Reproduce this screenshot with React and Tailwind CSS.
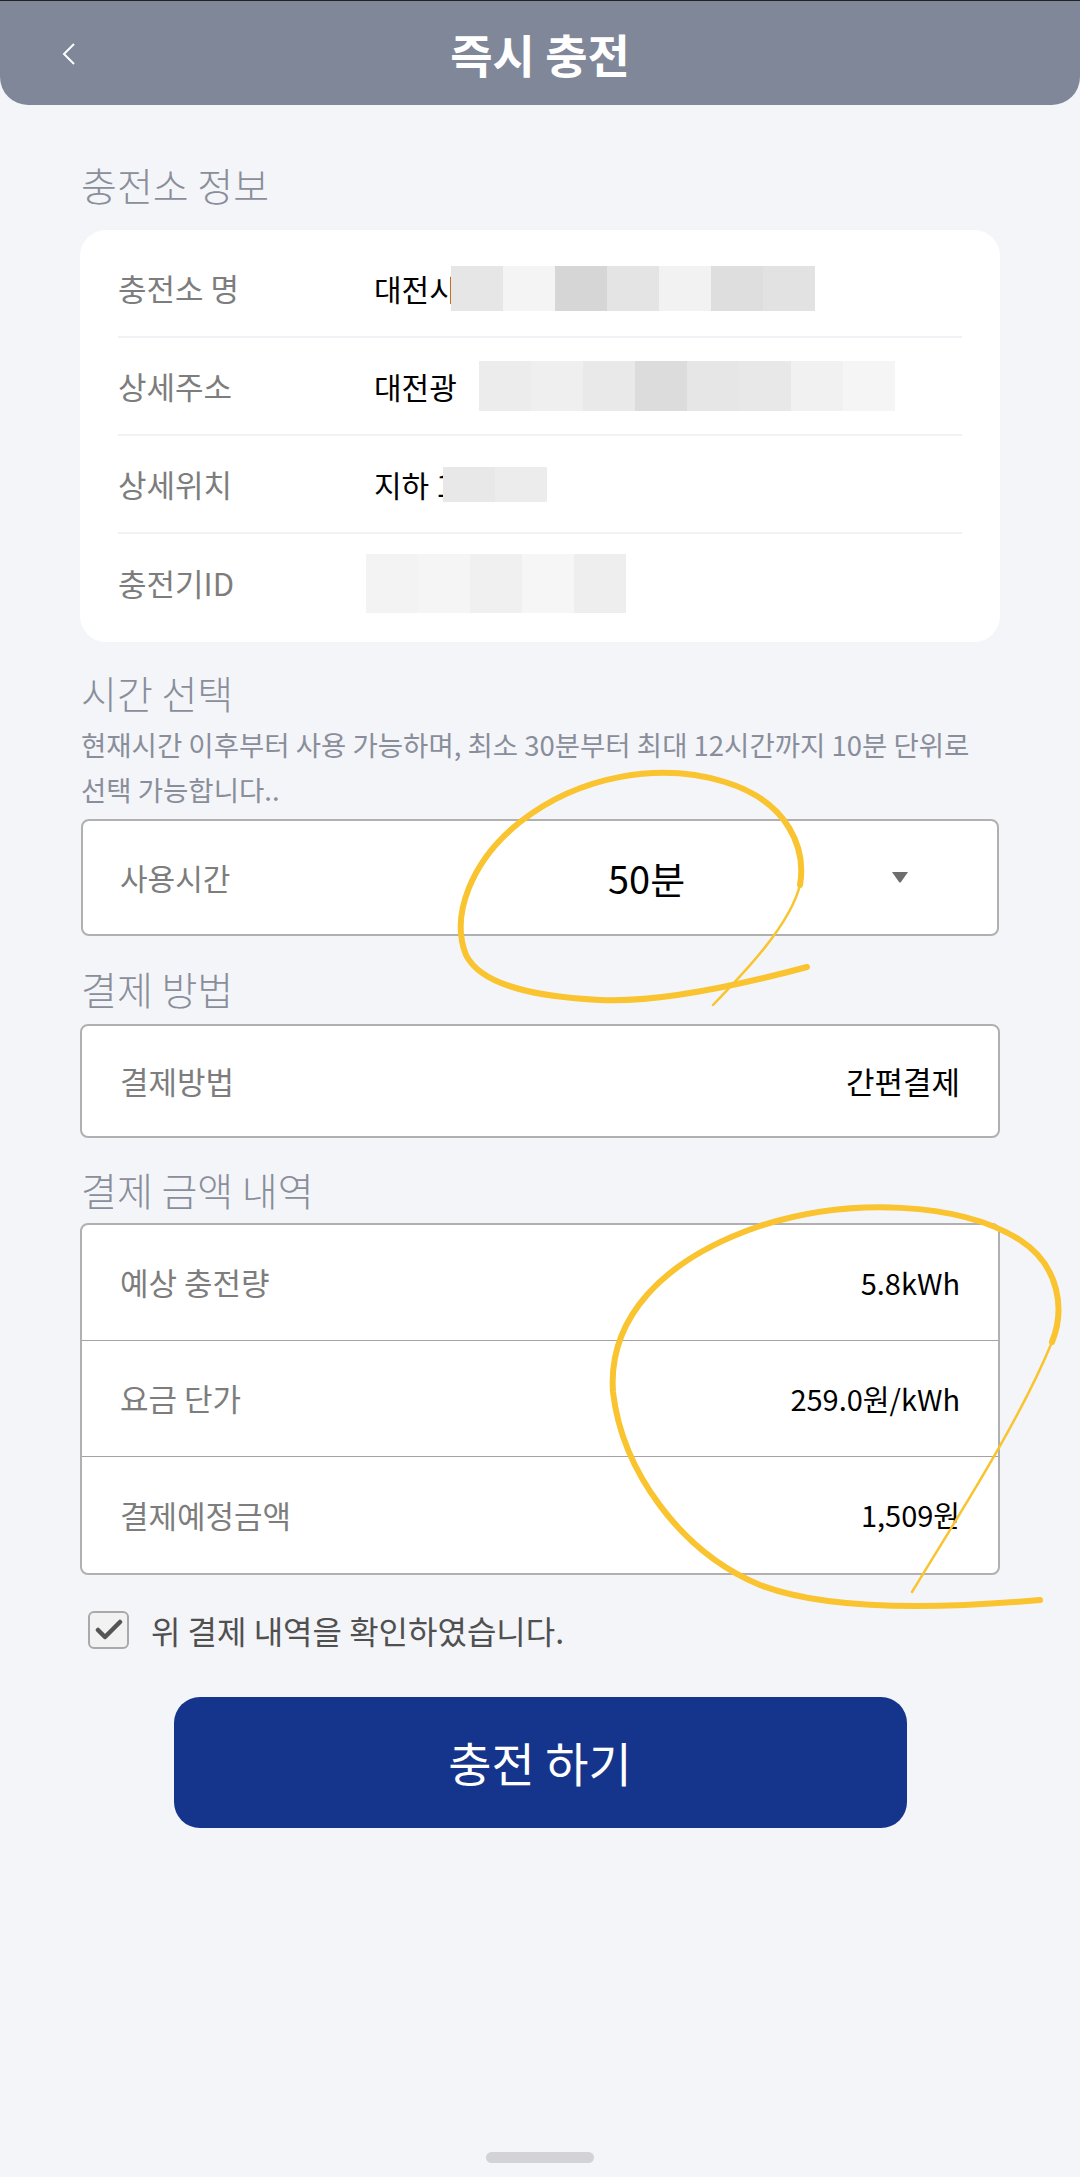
const font = { fontFamily: '"Noto Sans CJK KR", "Noto Sans", sans-serif' }

function Blur({ colors, w = 52, h = 45, className = '' }) {
  return (
    <div className={`flex ${className}`}>
      {colors.map((c, i) => (
        <div key={i} style={{ background: c, width: w, height: h }} />
      ))}
    </div>
  )
}

function InfoRow({ label, children, last }) {
  return (
    <div className={`flex h-[98px] items-center ${last ? '' : 'border-b-2 border-[#f1f2f5]'}`}>
      <span className="w-[256px] text-[31px] text-[#7d7d7d]">{label}</span>
      <div className="flex items-center text-[30px] text-black">{children}</div>
    </div>
  )
}

function Heading({ children, className = '' }) {
  return <h2 className={`pl-[81px] text-[39px] font-light leading-[50px] text-[#898e9a] ${className}`}>{children}</h2>
}

function AmountRow({ label, value, last }) {
  return (
    <div className={`flex h-[116px] items-center justify-between px-[38px] ${last ? '' : 'border-b border-[#a3a3a3]'}`}>
      <span className="text-[31px] text-[#7d7d7d]">{label}</span>
      <span className="text-[29px] text-black">{value}</span>
    </div>
  )
}

export default function App() {
  return (
    <div className="relative min-h-[2177px] bg-[#f4f5f9]" style={font}>
      <header className="relative flex h-[105px] items-center justify-center rounded-b-[28px] border-t border-[#222] bg-[#7f8799]">
        <svg className="absolute left-[60px] top-[41px]" width="18" height="24" viewBox="0 0 18 24">
          <path d="M14 2 L4 12 L14 22" fill="none" stroke="#fff" strokeWidth="2" />
        </svg>
        <h1 className="text-[46px] font-bold text-white">즉시 충전</h1>
      </header>

      <Heading className="mt-[54px]">충전소 정보</Heading>
      <section className="mx-[80px] mt-[21px] rounded-[26px] bg-white px-[38px] py-[10px]">
        <InfoRow label="충전소 명">
          <span>대전시</span>
          <Blur className="-ml-[6px]" colors={['#e6e6e6', '#f4f4f4', '#d6d6d6', '#e4e4e4', '#f2f2f2', '#dedede', '#e2e2e2']} />
        </InfoRow>
        <InfoRow label="상세주소">
          <span>대전광</span>
          <Blur className="ml-[22px]" h={50} colors={['#ececec', '#efefef', '#e9e9e9', '#dcdcdc', '#e6e6e6', '#e8e8e8', '#f1f1f1', '#f5f5f5']} />
        </InfoRow>
        <InfoRow label="상세위치">
          <span>지하 1</span>
          <Blur className="-ml-[10px]" h={35} colors={['#e8e8e8', '#ececec']} />
        </InfoRow>
        <InfoRow label="충전기ID" last>
          <Blur className="-ml-[8px]" h={59} colors={['#f3f3f3', '#f5f5f5', '#f0f0f0', '#f6f6f6', '#eeeeee']} />
        </InfoRow>
      </section>

      <Heading className="mt-[25px]">시간 선택</Heading>
      <p className="mt-[5px] whitespace-nowrap pl-[81px] text-[27.5px] leading-[45px] text-[#898e9a]">
        현재시간 이후부터 사용 가능하며, 최소 30분부터 최대 12시간까지 10분 단위로
        <br />
        선택 가능합니다..
      </p>
      <div className="mx-[81px] mt-[7px] flex h-[117px] items-center rounded-[8px] border-2 border-[#b0b0b0] bg-white pl-[37px] pr-[89px]">
        <span className="w-[488px] text-[30px] text-[#7d7d7d]">사용시간</span>
        <span className="text-[38px] text-black">50분</span>
        <svg className="ml-auto" width="16" height="11" viewBox="0 0 16 11">
          <path d="M0 0 H16 L9 10 Q8 11 7 10 Z" fill="#6e6e6e" />
        </svg>
      </div>

      <Heading className="mt-[27px]">결제 방법</Heading>
      <div className="mx-[80px] mt-[11px] flex h-[114px] items-center justify-between rounded-[8px] border-2 border-[#b0b0b0] bg-white px-[38px]">
        <span className="text-[31px] text-[#7d7d7d]">결제방법</span>
        <span className="text-[31px] text-black">간편결제</span>
      </div>

      <Heading className="mt-[26px]">결제 금액 내역</Heading>
      <div className="mx-[80px] mt-[9px] overflow-hidden rounded-[8px] border-2 border-[#b0b0b0] bg-white">
        <AmountRow label="예상 충전량" value="5.8kWh" />
        <AmountRow label="요금 단가" value="259.0원/kWh" />
        <AmountRow label="결제예정금액" value="1,509원" last />
      </div>

      <label className="ml-[88px] mt-[35px] flex h-[40px] items-center gap-[22px]">
        <span className="flex h-[38px] w-[41px] items-center justify-center rounded-[6px] border-2 border-[#a9a9a9] bg-[#f2f2f2]">
          <svg width="28" height="22" viewBox="0 0 28 22">
            <path d="M3 11 L10 18 L25 3" fill="none" stroke="#555" strokeWidth="4.5" strokeLinecap="round" strokeLinejoin="round" />
          </svg>
        </span>
        <span className="text-[32px] text-[#505050]">위 결제 내역을 확인하였습니다.</span>
      </label>

      <button className="mx-auto mt-[47px] flex h-[131px] w-[733px] items-center justify-center rounded-[26px] bg-[#14358b] text-[47px] text-white">
        충전 하기
      </button>

      <div className="absolute left-[486px] top-[2152px] h-[11px] w-[108px] rounded-full bg-[#d2d2d7]" />

      <svg className="pointer-events-none absolute left-0 top-0" width="1080" height="2177" viewBox="0 0 1080 2177">
        <g fill="none" stroke="#f9c42f" strokeLinecap="round">
          <path d="M807 967 C740 985 660 1003 600 1000 C540 997 482 987 466 955 C450 915 472 860 520 822 C580 775 660 762 725 782 C790 802 806 850 800 885" strokeWidth="6" />
          <path d="M800 885 C790 925 745 972 713 1005" strokeWidth="2.5" />
          <path d="M1040 1600 C950 1608 830 1612 760 1585 C680 1552 622 1470 613 1392 C608 1320 660 1260 760 1226 C850 1197 960 1202 1020 1240 C1060 1266 1065 1310 1052 1342" strokeWidth="6" />
          <path d="M1052 1342 C1020 1420 962 1510 912 1592" strokeWidth="2.5" />
        </g>
      </svg>
    </div>
  )
}
